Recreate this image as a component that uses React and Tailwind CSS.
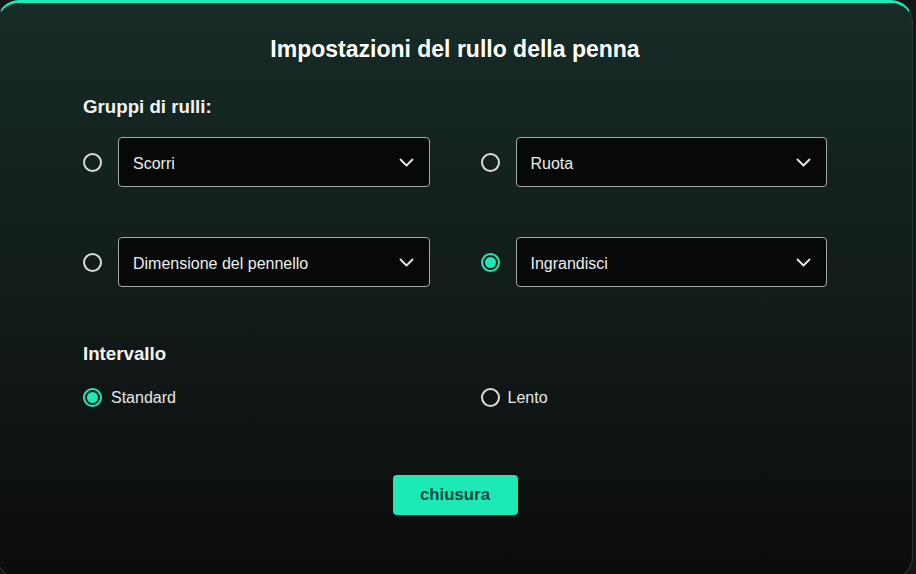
import React from "react";

function Radio({ checked }) {
  return checked ? (
    <span className="flex h-[19px] w-[19px] shrink-0 items-center justify-center rounded-full border-2 border-[#1de9b6]">
      <span className="h-[11px] w-[11px] rounded-full bg-[#1de9b6]" />
    </span>
  ) : (
    <span className="h-[19px] w-[19px] shrink-0 rounded-full border-2 border-[#d9dcdb]" />
  );
}

function Chevron() {
  return (
    <svg width="15" height="9" viewBox="0 0 15 9" fill="none">
      <polyline points="1.5,1.5 7.5,7.5 13.5,1.5" stroke="#e8eaea" strokeWidth="1.8" strokeLinecap="round" strokeLinejoin="round" />
    </svg>
  );
}

function SelectRow({ checked, label }) {
  return (
    <div className="flex items-center gap-[16px]">
      <Radio checked={checked} />
      <div className="flex h-[50px] flex-1 items-center justify-between rounded-[4px] border border-[#a3a9a7] bg-[#070909] pl-[14px] pr-[15px]">
        <span className="pt-[3px] text-[16px] text-[#eceeee]">{label}</span>
        <Chevron />
      </div>
    </div>
  );
}

export default function App() {
  return (
    <div
      className="h-[574px] w-[916px] overflow-hidden bg-[#141616]"
      style={{ fontFamily: '"Liberation Sans", Arial, sans-serif' }}
    >
      <div className="ml-[-3px] flex h-[579px] w-[916px] flex-col rounded-[22px] border border-t-[3px] border-[#1d3a33] border-t-[#1de9b6] bg-gradient-to-b from-[#172b27] via-[#121c1a] to-[#0b0c0c] px-[85px] pt-[33px]">
        <div className="text-center text-[23px] font-bold leading-[26px] text-white">
          Impostazioni del rullo della penna
        </div>
        <div className="mt-[34px] text-[18.7px] font-bold leading-[22px] text-[#f2f4f4]">
          Gruppi di rulli:
        </div>
        <div className="mt-[19px] grid grid-cols-2 gap-x-[51px] gap-y-[50px]">
          <SelectRow label="Scorri" />
          <SelectRow label="Ruota" />
          <SelectRow label="Dimensione del pennello" />
          <SelectRow label="Ingrandisci" checked />
        </div>
        <div className="mt-[56px] text-[18.7px] font-bold leading-[22px] text-[#f2f4f4]">
          Intervallo
        </div>
        <div className="mt-[21px] grid grid-cols-2 gap-x-[51px]">
          <div className="flex h-[22px] items-center gap-[9px]">
            <Radio checked />
            <span className="pt-[1px] text-[16px] text-[#e6e8e8]">Standard</span>
          </div>
          <div className="flex h-[22px] items-center gap-[8px]">
            <Radio />
            <span className="pt-[1px] text-[16px] text-[#e6e8e8]">Lento</span>
          </div>
        </div>
        <div className="mt-[67px] flex justify-center">
          <button className="h-[40px] w-[125px] rounded-[4px] bg-[#1de9b6] text-[16.8px] font-bold text-[#0f4a3d]">
            chiusura
          </button>
        </div>
      </div>
    </div>
  );
}
